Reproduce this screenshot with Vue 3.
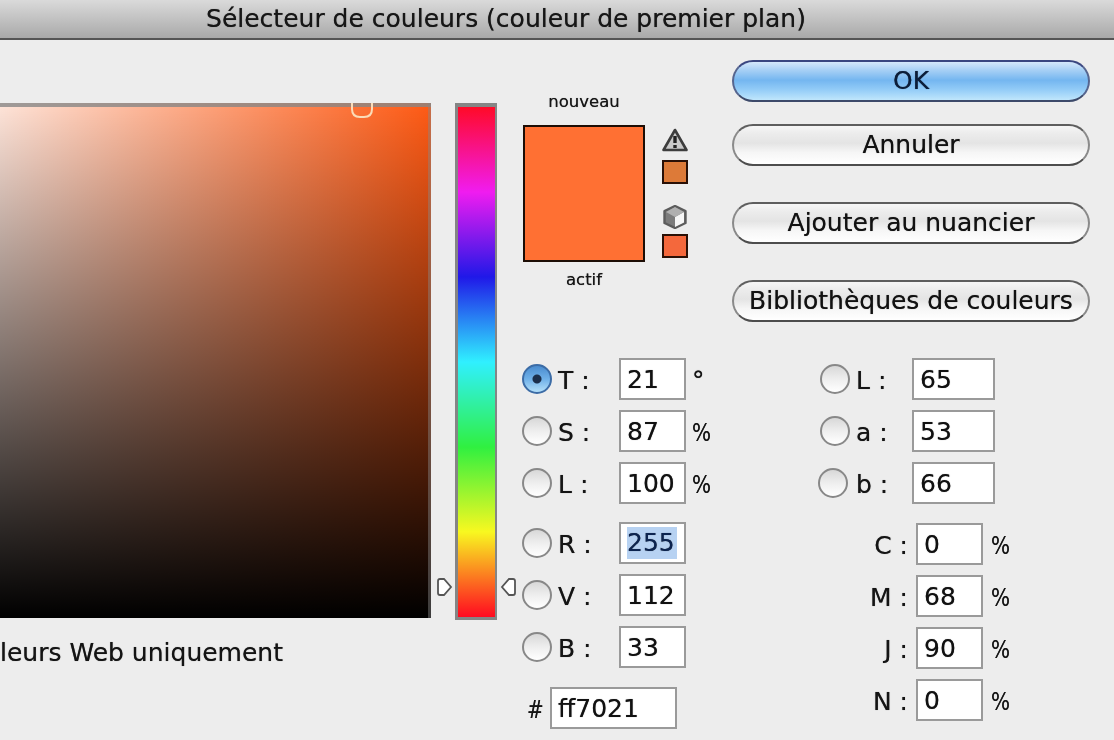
<script setup>
const hsl = [
  { key: 'T', value: '21', unit: '°', on: true },
  { key: 'S', value: '87', unit: '%' },
  { key: 'L', value: '100', unit: '%' },
]
const rgb = [
  { key: 'R', value: '255', selected: true },
  { key: 'V', value: '112' },
  { key: 'B', value: '33' },
]
const lab = [
  { key: 'L', value: '65' },
  { key: 'a', value: '53' },
  { key: 'b', value: '66' },
]
const cmyk = [
  { key: 'C', value: '0' },
  { key: 'M', value: '68' },
  { key: 'J', value: '90' },
  { key: 'N', value: '0' },
]
</script>

<template>
  <div class="dialog">
    <div class="titlebar">Sélecteur de couleurs (couleur de premier plan)</div>
    <div class="body">
      <div class="picker">
        <div class="field">
          <svg class="ring" width="26" height="16" viewBox="0 0 26 16">
            <path d="M3 0 V6 Q3 14 11 14 H15 Q23 14 23 6 V0" fill="none" stroke="#fbdcb8" stroke-width="2" />
          </svg>
        </div>
        <div class="web-only">leurs Web uniquement</div>
      </div>

      <div class="hue">
        <svg class="handle handle-left" width="17" height="20" viewBox="0 0 17 20">
          <path d="M4 2 H8 L15 10 L8 18 H4 Q2 18 2 16 V4 Q2 2 4 2 Z" fill="#fff" stroke="#555" stroke-width="1.8" />
        </svg>
        <svg class="handle handle-right" width="17" height="20" viewBox="0 0 17 20">
          <path d="M13 2 H9 L2 10 L9 18 H13 Q15 18 15 16 V4 Q15 2 13 2 Z" fill="#fff" stroke="#555" stroke-width="1.8" />
        </svg>
      </div>

      <div class="side">
        <div class="side-top">
          <div class="preview">
            <div class="preview-label">nouveau</div>
            <div class="preview-box"></div>
            <div class="preview-label actif">actif</div>
          </div>
          <div class="gamut">
            <svg width="26" height="24" viewBox="0 0 26 24">
              <path d="M13 2 L24.5 22 H1.5 Z" fill="#c9c9c9" stroke="#3d3d3d" stroke-width="2.6" stroke-linejoin="round" />
              <path d="M13 8 V15" stroke="#222" stroke-width="3.4" />
              <path d="M13 17 V20" stroke="#222" stroke-width="3.4" />
            </svg>
            <div class="swatch swatch-print"></div>
            <svg class="cube" width="26" height="24" viewBox="0 0 26 24">
              <path d="M13 1 L23.5 6 V18 L13 23 L2.5 18 V6 Z" fill="#7c7c7c" stroke="#5c5c5c" stroke-width="2.4" stroke-linejoin="round" />
              <path d="M13 12 L22 7 V17.5 L13 22 Z" fill="#f6f6f6" />
              <path d="M4 7 L13 2 L22 7 L13 12 Z" fill="#b0b0b0" />
            </svg>
            <div class="swatch swatch-web"></div>
          </div>
          <div class="buttons">
            <div class="btn btn-ok">OK</div>
            <div class="btn">Annuler</div>
            <div class="btn btn-far">Ajouter au nuancier</div>
            <div class="btn btn-far">Bibliothèques de couleurs</div>
          </div>
        </div>

        <div class="values">
          <div class="col-left">
            <div class="group">
              <div v-for="r in hsl" :key="r.key" class="row">
                <span class="radio" :class="{ on: r.on }"></span>
                <span class="label">{{ r.key }} :</span>
                <span class="input">{{ r.value }}</span>
                <span class="unit" :class="{ narrow: r.unit === '%' }">{{ r.unit }}</span>
              </div>
            </div>
            <div class="group group-rgb">
              <div v-for="r in rgb" :key="r.key" class="row">
                <span class="radio"></span>
                <span class="label">{{ r.key }} :</span>
                <span class="input"><span :class="{ selected: r.selected }">{{ r.value }}</span></span>
              </div>
            </div>
            <div class="row hex">
              <span class="hash"><span class="narrow">#</span></span>
              <span class="input input-hex">ff7021</span>
            </div>
          </div>

          <div class="col-right">
            <div class="group">
              <div v-for="r in lab" :key="r.key" class="row">
                <span class="radio"></span>
                <span class="label label-lab">{{ r.key }} :</span>
                <span class="input input-lab">{{ r.value }}</span>
              </div>
            </div>
            <div class="group group-cmyk">
              <div v-for="r in cmyk" :key="r.key" class="row">
                <span class="label-cmyk">{{ r.key }} :</span>
                <span class="input input-cmyk">{{ r.value }}</span>
                <span class="unit unit-cmyk narrow">%</span>
              </div>
            </div>
          </div>
        </div>
      </div>
    </div>
  </div>
</template>

<style>
html, body { background: #ededed; }
</style>

<style scoped>
.dialog {
  width: 1114px; height: 740px; overflow: hidden;
  background: #ededed; color: #141414;
  font-family: "DejaVu Sans", "Liberation Sans", sans-serif;
  font-size: 25px;
  text-shadow: 0 0 0.7px rgba(0, 0, 0, 0.7);
  filter: blur(0.35px);
}
.titlebar {
  height: 38px; line-height: 38px; text-align: center; box-sizing: content-box;
  padding-right: 102px; width: 1012px;
  font-size: 25px; color: #161616;
  background: linear-gradient(#dadada, #a9a9a9);
  border-bottom: 2px solid #555;
}
.body { display: flex; height: 700px; }

.picker { width: 515px; margin-left: -84px; padding-top: 63px; flex: none; }
.field {
  position: relative; height: 515px; box-sizing: border-box;
  box-shadow: inset 0 4px 0 rgba(135, 135, 135, 0.8), inset -3px 0 0 rgba(135, 135, 135, 0.45);
  background:
    linear-gradient(to bottom, transparent, #000),
    linear-gradient(to right, #fff, #ff5a14);
}
.ring { position: absolute; left: 433px; top: 0; }
.web-only { margin-top: 21px; padding-left: 84px; line-height: 28px; white-space: nowrap; }

.hue {
  position: relative; flex: none;
  width: 42px; height: 517px; margin: 63px 0 0 24px; box-sizing: border-box;
  border: solid #858585; border-width: 4px 2px 3px 3px;
  background: linear-gradient(#ff0a28, #f01cf0 16.7%, #2018e8 33.3%, #30f0ff 50%, #30f040 66.7%, #f8f820 83.3%, #ff0a20);
}
.handle { position: absolute; top: 470px; }
.handle-left { left: -22px; }
.handle-right { right: -22px; }

.side { margin-left: 25px; flex: none; }
.side-top { display: flex; height: 318px; }
.preview { width: 122px; margin-left: 1px; padding-top: 53px; text-align: center; font-size: 16.5px; }
.preview-label { line-height: 18px; }
.preview-box {
  height: 137px; margin-top: 14px; box-sizing: border-box;
  border: 2px solid #1d0d05; background: #ff7033;
}
.actif { margin-top: 9px; }
.gamut { width: 26px; margin-left: 17px; padding-top: 88px; }
.gamut svg { display: block; }
.swatch { width: 26px; height: 24px; box-sizing: border-box; border: 2px solid #2a1006; }
.swatch-print { margin-top: 8px; background: #dd7a38; }
.swatch-web { margin-top: 5px; background: #f4683c; }
.cube { margin-top: 21px; }

.buttons { width: 358px; margin-left: 44px; padding-top: 20px; }
.btn {
  height: 42px; line-height: 38px; box-sizing: border-box; text-align: center;
  border: 2px solid #8a8a8a; border-top-color: #5e5e5e; border-bottom-color: #4d4d4d;
  border-radius: 21px; color: #111; white-space: nowrap; margin-bottom: 22px;
  background: linear-gradient(#f6f6f6 0%, #ececec 20%, #e4e4e4 45%, #f6f6f6 70%, #fff 100%);
}
.btn-far { margin-top: 36px; margin-bottom: 0; }
.btn-ok {
  border-color: #56658f; border-top-color: #3a4680; border-bottom-color: #3d4a6a; color: #0b1d3a;
  background: linear-gradient(#d5e8fb 0%, #a6cff5 22%, #74b6f0 48%, #92cbf7 72%, #bfe6fc 100%);
}

.values { display: flex; }
.col-left { width: 298px; flex: none; }
.group { display: flex; flex-direction: column; gap: 10px; }
.group-rgb { margin-top: 18px; }
.row { display: flex; align-items: center; height: 42px; }
.radio {
  width: 30px; height: 30px; box-sizing: border-box; flex: none; border-radius: 50%;
  border: 2.5px solid #888;
  background: linear-gradient(#d8d8d8, #eeeeee 50%, #fff);
}
.radio.on {
  border-color: #3c6ca6;
  background:
    radial-gradient(circle, #1b2f4c 0 4px, transparent 5px),
    linear-gradient(#4a8ccf, #6fb0e8 50%, #b4e0fa);
}
.label { width: 67px; padding: 3px 0 0 6px; box-sizing: border-box; flex: none; white-space: pre; }
.label-lab { width: 61px; }
.input {
  width: 67px; height: 42px; line-height: 40px; box-sizing: border-box; flex: none;
  padding-left: 6px; background: #fff; border: 2px solid #9a9a9a; color: #111; white-space: nowrap;
}
.selected {
  display: inline-block; vertical-align: top; margin-top: 3px; line-height: 32px;
  background: #b7d2f2; color: #0c2450; padding-right: 2px;
}
.unit { margin-left: 6px; padding-top: 3px; }
.narrow { display: inline-block; transform: scaleX(0.8); transform-origin: left center; }
.hex { margin-top: 19px; padding-left: 5px; }
.hash { width: 23px; flex: none; padding-top: 3px; }
.input-hex { width: 127px; }

.col-right { flex: none; }
.input-lab { width: 83px; margin-left: 1px; }
.group-cmyk { margin-top: 19px; }
.label-cmyk { width: 96px; padding: 3px 8px 0 0; box-sizing: border-box; text-align: right; white-space: pre; flex: none; }
.input-cmyk { width: 67px; }
.unit-cmyk { margin-left: 8px; }
.col-right .group:first-child .row:last-child .radio { margin-left: -2px; margin-right: 2px; }
</style>
